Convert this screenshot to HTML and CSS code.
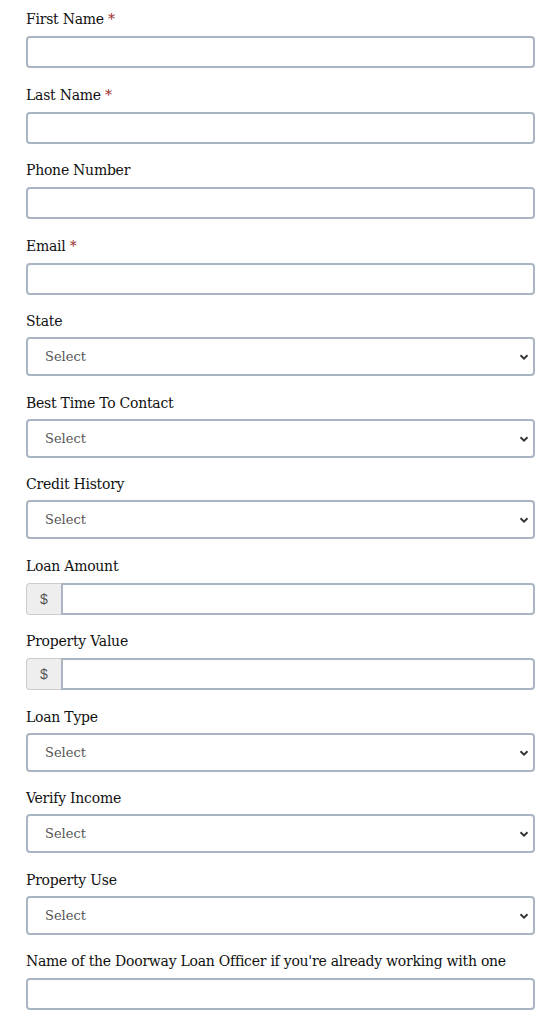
FILE: index.html
```html
<!DOCTYPE html>
<html lang="en">
<head>
  <meta charset="utf-8" />
  <meta name="viewport" content="width=device-width, initial-scale=1" />
  <title>Contact a Loan Officer</title>
  <link rel="stylesheet" href="styles.css">
</head>
<body>
  <form class="lead-form">
    <div class="field">
      <label class="field-label">First Name <span class="req">*</span></label>
      <input class="text-input" type="text" />
    </div>
    <div class="field">
      <label class="field-label">Last Name <span class="req">*</span></label>
      <input class="text-input" type="text" />
    </div>
    <div class="field">
      <label class="field-label">Phone Number</label>
      <input class="text-input" type="tel" />
    </div>
    <div class="field">
      <label class="field-label">Email <span class="req">*</span></label>
      <input class="text-input" type="email" />
    </div>

    <div class="field">
      <label class="field-label">State</label>
      <div class="select-wrap">
        <select class="select-input"><option>Select</option></select>
        <svg class="chevron" width="10" height="8" viewBox="0 0 10 8"><path d="M1.5 2.2 L5 5.6 L8.5 2.2" fill="none" stroke="#333" stroke-width="1.9"/></svg>
      </div>
    </div>
    <div class="field">
      <label class="field-label">Best Time To Contact</label>
      <div class="select-wrap">
        <select class="select-input"><option>Select</option></select>
        <svg class="chevron" width="10" height="8" viewBox="0 0 10 8"><path d="M1.5 2.2 L5 5.6 L8.5 2.2" fill="none" stroke="#333" stroke-width="1.9"/></svg>
      </div>
    </div>
    <div class="field">
      <label class="field-label">Credit History</label>
      <div class="select-wrap">
        <select class="select-input"><option>Select</option></select>
        <svg class="chevron" width="10" height="8" viewBox="0 0 10 8"><path d="M1.5 2.2 L5 5.6 L8.5 2.2" fill="none" stroke="#333" stroke-width="1.9"/></svg>
      </div>
    </div>

    <div class="field">
      <label class="field-label">Loan Amount</label>
      <div class="money-group">
        <span class="money-prefix">$</span>
        <input class="text-input money-input" type="text" />
      </div>
    </div>
    <div class="field">
      <label class="field-label">Property Value</label>
      <div class="money-group">
        <span class="money-prefix">$</span>
        <input class="text-input money-input" type="text" />
      </div>
    </div>

    <div class="field">
      <label class="field-label">Loan Type</label>
      <div class="select-wrap">
        <select class="select-input"><option>Select</option></select>
        <svg class="chevron" width="10" height="8" viewBox="0 0 10 8"><path d="M1.5 2.2 L5 5.6 L8.5 2.2" fill="none" stroke="#333" stroke-width="1.9"/></svg>
      </div>
    </div>
    <div class="field">
      <label class="field-label">Verify Income</label>
      <div class="select-wrap">
        <select class="select-input"><option>Select</option></select>
        <svg class="chevron" width="10" height="8" viewBox="0 0 10 8"><path d="M1.5 2.2 L5 5.6 L8.5 2.2" fill="none" stroke="#333" stroke-width="1.9"/></svg>
      </div>
    </div>
    <div class="field">
      <label class="field-label">Property Use</label>
      <div class="select-wrap">
        <select class="select-input"><option>Select</option></select>
        <svg class="chevron" width="10" height="8" viewBox="0 0 10 8"><path d="M1.5 2.2 L5 5.6 L8.5 2.2" fill="none" stroke="#333" stroke-width="1.9"/></svg>
      </div>
    </div>

    <div class="field">
      <label class="field-label">Name of the Doorway Loan Officer if you're already working with one</label>
      <input class="text-input" type="text" />
    </div>
  </form>
</body>
</html>
```
FILE: styles.css
```css
body {
  font-family: "DejaVu Serif", "Liberation Serif", serif;
  margin: 0;
  padding: 9px 19px 0 26px;
  background-color: #fff;
  color: #111;
}
.lead-form {
  display: flex;
  flex-direction: column;
}
.field {
  display: flex;
  flex-direction: column;
  margin-bottom: 16.5px;
}
.field-label {
  font-size: 14px;
  line-height: 20px;
  margin-bottom: 7px;
  color: #111;
  letter-spacing: -0.25px;
}
.req {
  color: #9b2c2c;
}
.text-input {
  box-sizing: border-box;
  height: 32px;
  width: 100%;
  margin: 0;
  border: 2px solid #aab5c3;
  border-radius: 4px;
  background: #fff;
  font-family: inherit;
  font-size: 14px;
  padding: 0 10px;
}
.select-wrap {
  position: relative;
  margin-top: -1px;
}
.select-input {
  box-sizing: border-box;
  width: 100%;
  height: 39px;
  margin: 0;
  appearance: none;
  -webkit-appearance: none;
  border: 2px solid #aab5c3;
  border-radius: 4px;
  background: #fff;
  font-family: inherit;
  font-size: 13px;
  color: #555;
  padding: 0 17px;
}
.chevron {
  position: absolute;
  right: 6px;
  top: 16px;
}
.money-group {
  display: flex;
}
.money-prefix {
  box-sizing: border-box;
  width: 35px;
  height: 32px;
  display: flex;
  align-items: center;
  justify-content: center;
  background: #eee;
  border: 1px solid #ccc;
  border-right: none;
  border-radius: 4px 0 0 4px;
  font-family: "Liberation Sans", Arial, sans-serif;
  font-size: 14px;
  color: #555;
}
.money-input {
  flex: 1;
  width: auto;
  border-radius: 0 4px 4px 0;
}
```
